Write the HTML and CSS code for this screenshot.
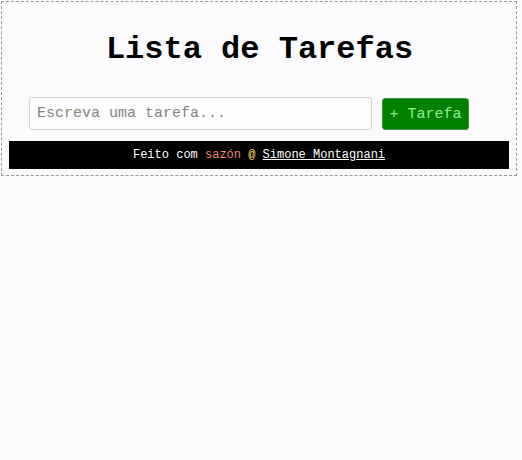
FILE: index.html
```html
<!DOCTYPE html>
<html lang="pt">
<head>
<meta charset="utf-8">
<title>Lista de Tarefas</title>
<link rel="stylesheet" href="styles.css">
</head>
<body>
  <main class="app">
    <h1 class="title">Lista de Tarefas</h1>
    <form class="add-form">
      <input class="task-input" type="text" placeholder="Escreva uma tarefa...">
      <button class="add-btn" type="button">+ Tarefa</button>
    </form>
    <footer class="footer">Feito com <span class="love">sazón</span> <span class="at">@</span> <a class="author" href="#">Simone Montagnani</a></footer>
  </main>
</body>
</html>
```
FILE: styles.css
```css
html, body {
  margin: 0;
  padding: 0;
  background: #fbfbfe;
}
body {
  font-family: "Courier New", "Nimbus Mono PS", "FreeMono", "Liberation Mono", monospace;
}
.app {
  box-sizing: border-box;
  width: 516px;
  margin: 1px 0 0 1px;
  border: 1px dashed #9a9a90;
  padding: 30px 6px 6px 7px;
}
.title {
  margin: 0;
  font-size: 32px;
  font-weight: bold;
  line-height: 36px;
  text-align: center;
  color: #000;
}
.add-form {
  display: flex;
  align-items: flex-start;
  margin: 29px 0 0 20px;
  gap: 10px;
}
.task-input {
  box-sizing: border-box;
  width: 343px;
  height: 33px;
  margin: 0;
  padding: 0 7px;
  border: 1px solid #d6d3c4;
  border-radius: 3px;
  background: #fdfdff;
  font-family: inherit;
  font-size: 15px;
  color: #333;
}
.task-input::placeholder {
  color: #85857a;
}
.add-btn {
  box-sizing: border-box;
  width: 87px;
  height: 32px;
  margin: 1px 0 0 0;
  padding: 0;
  border: 1px solid #3a9a3a;
  border-radius: 3px;
  background: #008000;
  color: #90ee90;
  font-family: inherit;
  font-size: 15px;
}
.footer {
  box-sizing: border-box;
  width: 500px;
  height: 28px;
  margin-top: 11px;
  padding-top: 7px;
  background: #000;
  color: #fff;
  font-size: 12px;
  line-height: 14px;
  text-align: center;
}
.love {
  color: #f0807a;
}
.at {
  color: #ffd966;
}
.author {
  color: #fff;
  text-decoration: underline;
}
```
